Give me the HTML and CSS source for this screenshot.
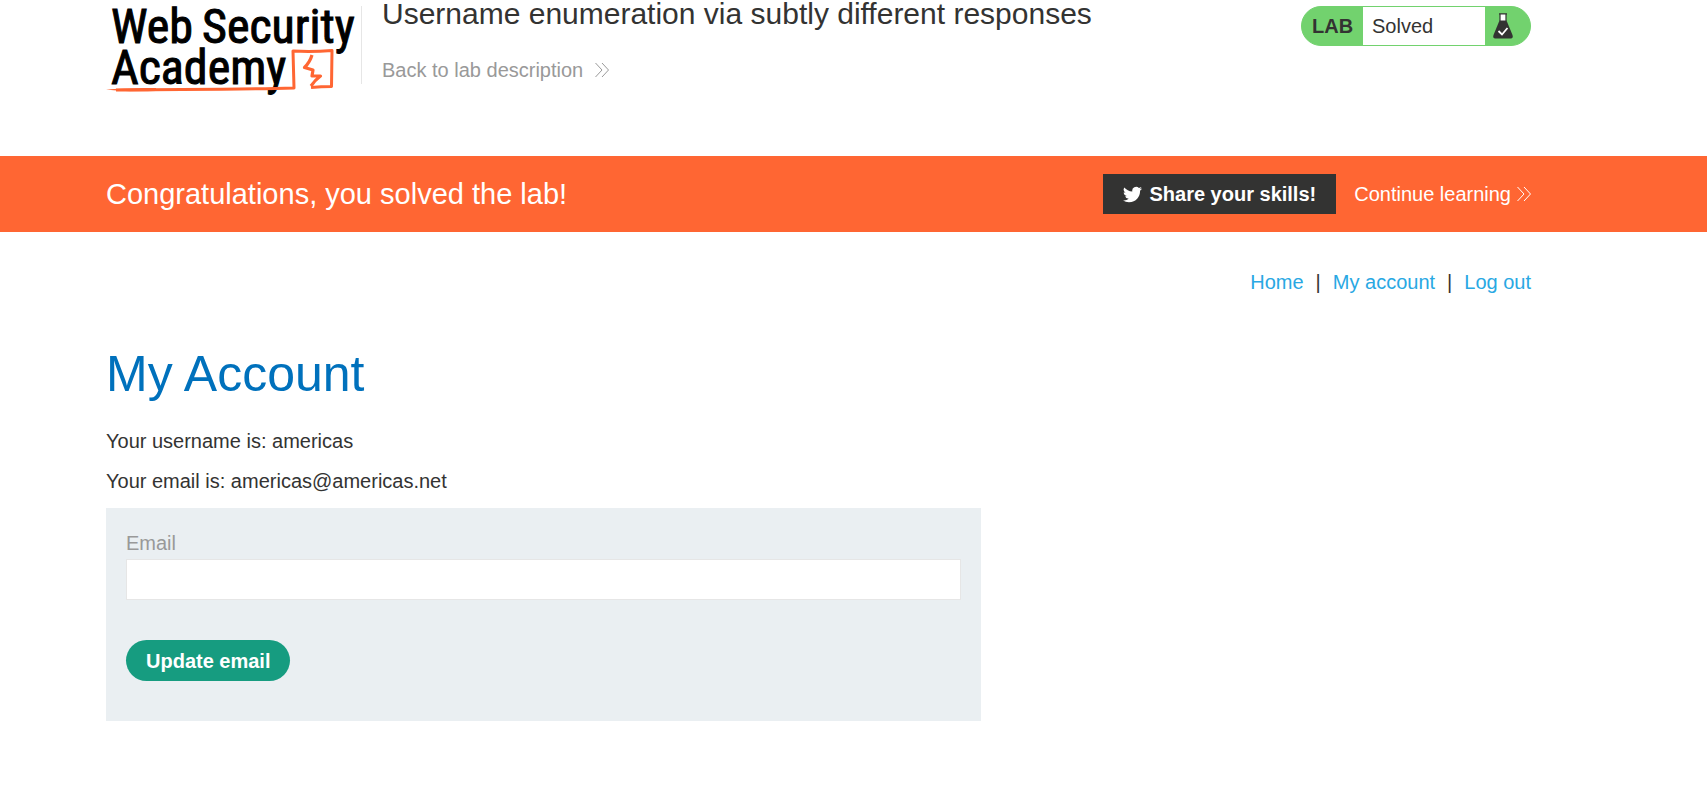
FILE: index.html
```html
<!DOCTYPE html>
<html lang="en">
<head>
<meta charset="utf-8">
<title>Username enumeration via subtly different responses</title>
<link rel="stylesheet" href="styles.css">
</head>
<body>
<header class="lab-header container">
  <a class="logo" href="#" aria-label="Web Security Academy">
    <span class="logo-line"><span>Web</span><span>Security</span></span>
    <span class="logo-line">Academy</span>
    <svg class="logo-mark" viewBox="0 0 250 100" aria-hidden="true">
      <path d="M10 90 C60 89 120 90 188 88 L187 51 Q206 52 226 50.500 L225.500 86.500 Q215 86.500 205 87.500" fill="none" stroke="#ff6633" stroke-width="3" stroke-linejoin="round"/>
      <path d="M0 89.500 Q20 87.500 50 88 L50 91 Q20 92 0 89.500Z" fill="#ff6633"/>
      <path d="M206 55 Q204 62 198.500 67.500 L207 70 L206 76 L214.500 76 Q209 80 205 86" fill="none" stroke="#ff6633" stroke-width="3.200" stroke-linejoin="round"/>
    </svg>
  </a>
  <div class="title-block">
    <h1 class="lab-title">Username enumeration via subtly different responses</h1>
    <a class="back-link" href="#">Back to lab description
      <svg class="chevrons" viewBox="0 0 14 16" aria-hidden="true"><path d="M0.500 1 L7 8 L0.500 15 M7 1 L13.500 8 L7 15"/></svg>
    </a>
  </div>
  <div class="lab-status">
    <span class="status-tag">LAB</span>
    <span class="status-text">Solved</span>
    <span class="status-icon">
      <svg class="flask" viewBox="0 0 20 26" aria-hidden="true">
        <path d="M7 1 H13 V8 H7Z" fill="#fff"/>
        <path d="M6 .8 H14 M7 1 V8 M13 1 V8" fill="none" stroke="#333332" stroke-width="1.200"/>
        <path d="M6.500 7.500 H13.500 L19.500 22 Q20.500 25.500 18 25.500 H2 Q-.5 25.500 .5 22Z" fill="#333332"/>
        <path d="M5.500 18 L9 21.500 L14.500 15" fill="none" stroke="#fff" stroke-width="1.800"/>
      </svg>
    </span>
  </div>
</header>
<section class="banner">
  <div class="container banner-inner">
    <p class="banner-text">Congratulations, you solved the lab!</p>
    <button class="share" type="button">
      <svg class="bird" viewBox="0 0 24 24" aria-hidden="true"><path d="M23.950 4.570a10 10 0 0 1-2.820.770 4.960 4.960 0 0 0 2.160-2.720c-.950.560-2 .960-3.130 1.180a4.920 4.920 0 0 0-8.380 4.480C7.690 8.100 4.070 6.130 1.640 3.160a4.920 4.920 0 0 0 1.520 6.570 4.900 4.900 0 0 1-2.230-.610v.060a4.920 4.920 0 0 0 3.950 4.830 5 5 0 0 1-2.210.080 4.940 4.940 0 0 0 4.600 3.420A9.870 9.870 0 0 1 0 19.540a13.990 13.990 0 0 0 7.550 2.210c9.050 0 14-7.500 14-13.980 0-.210 0-.420-.020-.630a9.940 9.940 0 0 0 2.460-2.550z"/></svg>
      Share your skills!
    </button>
    <a class="continue" href="#">Continue learning
      <svg class="chevrons" viewBox="0 0 14 16" aria-hidden="true"><path d="M0.500 1 L7 8 L0.500 15 M7 1 L13.500 8 L7 15"/></svg>
    </a>
  </div>
</section>
<main class="container">
  <nav class="top-links">
    <a href="#">Home</a><span>|</span><a href="#">My account</a><span>|</span><a href="#">Log out</a>
  </nav>
  <h2 class="page-title">My Account</h2>
  <p class="detail">Your username is: americas</p>
  <p class="detail">Your email is: americas@americas.net</p>
  <form class="email-form">
    <label for="email">Email</label>
    <input id="email" type="email" name="email">
    <button class="update" type="button">Update email</button>
  </form>
</main>
</body>
</html>
```

FILE: styles.css
```css
* { box-sizing: border-box; }
body {
  margin: 0;
  background: #fff;
  color: #333332;
  font: 20px/24px "Liberation Sans", Arial, sans-serif;
}
h1, h2, p { margin: 0; font-weight: 400; }
a { text-decoration: none; }
button, input { font: inherit; }
svg { display: block; flex: none; }

.container { padding: 0 176px 0 106px; }

.lab-header { display: flex; align-items: flex-start; height: 156px; }
.logo {
  position: relative;
  flex: none;
  width: 255px;
  padding: 6px 0 0 5px;
  color: #000;
  font: 48px/41px "Roboto Condensed", "Liberation Sans Narrow", "Arial Narrow", sans-serif;
  -webkit-text-stroke: 1px #000;
}
.logo-line { display: flex; gap: 9px; }
.logo-mark { position: absolute; left: 0; top: 0; width: 250px; height: 100px; }
.title-block {
  display: flex;
  flex-direction: column;
  align-items: flex-start;
  flex: 1;
  gap: 28px;
  height: 78px;
  margin-top: 6px;
  padding-left: 20px;
  border-left: 1px solid #e6e6e6;
}
.lab-title { margin-top: -8px; font-size: 30px; line-height: 32px; }
.back-link, .continue { display: flex; align-items: center; }
.back-link { gap: 12px; color: #999; }
.chevrons { width: 14px; height: 16px; fill: none; stroke: currentColor; stroke-width: 1; }

.lab-status {
  display: flex;
  width: 230px;
  height: 40px;
  margin-top: 6px;
  border: 1px solid #72d26e;
  border-radius: 20px;
  background: #72d26e;
  line-height: 38px;
  overflow: hidden;
}
.status-tag { width: 61px; padding-left: 10px; font-weight: 700; }
.status-text { flex: 1; padding-left: 9px; background: #fff; }
.status-icon { display: flex; align-items: center; width: 45px; padding-left: 8px; }
.flask { width: 20px; height: 26px; }

.banner { background: #ff6633; color: #fff; }
.banner-inner { display: flex; align-items: center; height: 76px; }
.banner-text { flex: 1; font-size: 29px; line-height: 36px; }
.share {
  display: flex;
  align-items: center;
  gap: 7px;
  height: 40px;
  padding: 0 20px;
  border: 0;
  background: #333332;
  color: #fff;
  font-weight: 700;
}
.bird { width: 19px; height: 19px; fill: #fff; }
.continue { gap: 6px; margin-left: 18px; color: #fff; }

.top-links { display: flex; justify-content: flex-end; gap: 12px; padding-top: 38px; }
.top-links a { color: #29a8e3; }
.page-title { margin-top: 48px; color: #0071bc; font-size: 50px; line-height: 64px; }
.detail { margin-top: 16px; }
.page-title + .detail { margin-top: 23px; }

.email-form {
  display: flex;
  flex-direction: column;
  align-items: flex-start;
  width: 875px;
  max-width: 100%;
  margin-top: 15px;
  padding: 23px 20px 40px;
  background: #eaeff2;
}
.email-form label { color: #999; }
.email-form input {
  width: 100%;
  height: 41px;
  margin-top: 4px;
  padding: 0 10px;
  border: 1px solid #e6e6e6;
  background: #fff;
}
.update {
  height: 41px;
  margin-top: 40px;
  padding: 0 20px;
  border: 0;
  border-radius: 21px;
  background: #169c80;
  color: #fff;
  font-weight: 700;
}
```
